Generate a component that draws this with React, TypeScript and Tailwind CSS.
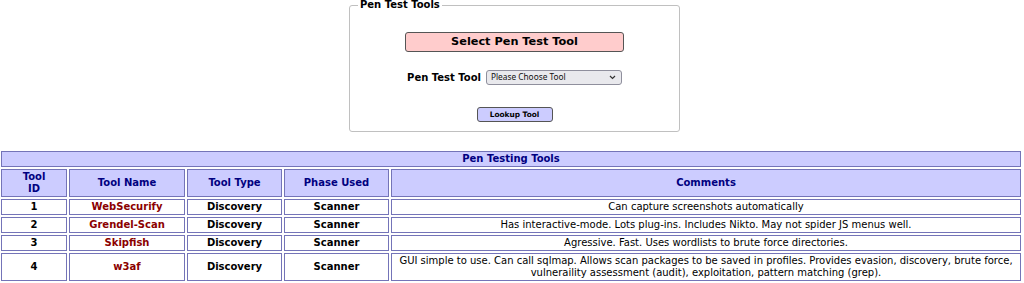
import React from "react";

const rows = [
  { id: "1", name: "WebSecurify", type: "Discovery", phase: "Scanner", comment: "Can capture screenshots automatically" },
  { id: "2", name: "Grendel-Scan", type: "Discovery", phase: "Scanner", comment: "Has interactive-mode. Lots plug-ins. Includes Nikto. May not spider JS menus well." },
  { id: "3", name: "Skipfish", type: "Discovery", phase: "Scanner", comment: "Agressive. Fast. Uses wordlists to brute force directories." },
  { id: "4", name: "w3af", type: "Discovery", phase: "Scanner", comment: "GUI simple to use. Can call sqlmap. Allows scan packages to be saved in profiles. Provides evasion, discovery, brute force, vulneraility assessment (audit), exploitation, pattern matching (grep)." },
];

const cell = "border border-[#7474b8] text-center px-[1px] py-[1px]";

export default function App() {
  return (
    <div className="font-['DejaVu_Sans',sans-serif] text-black bg-white w-[1024px] h-[283px] overflow-hidden">
      <fieldset className="w-[331px] h-[133px] border border-[#c0c0c0] rounded-[3px] px-[8px] pt-[1px] mt-[-1px] ml-[349px]">
        <legend className="font-bold text-[10px] leading-[12px] px-[2px]">Pen Test Tools</legend>
        <div className="flex flex-col items-center">
          <div className="mt-[20px] w-[219px] h-[20px] bg-[#ffcccc] border border-[#555] rounded-[3px] flex items-center justify-center font-bold text-[11.3px]">
            Select Pen Test Tool
          </div>
          <div className="mt-[18px] flex items-center gap-[5px]">
            <span className="font-bold text-[10px]">Pen Test Tool</span>
            <div className="w-[136px] h-[15px] bg-[#e9e9ed] border border-[#8f8f9d] rounded-[3px] flex items-center justify-between pl-[4px] pr-[5px] font-['Noto_Sans',sans-serif] text-[8.3px] text-[#111]">
              <span>Please Choose Tool</span>
              <svg width="7" height="5" viewBox="0 0 7 5"><path d="M1 1l2.5 2.5L6 1" fill="none" stroke="#333" strokeWidth="1.2" /></svg>
            </div>
          </div>
          <div className="mt-[22px] w-[76px] h-[15px] bg-[#ccccff] border border-[#555] rounded-[3px] flex items-center justify-center font-bold text-[7.4px]">
            Lookup Tool
          </div>
        </div>
      </fieldset>
      <table className="mt-[17px] w-[1024px] ml-[-1px] table-fixed border-separate border-spacing-[2px] text-[10px] leading-[12px]">
        <colgroup>
          <col className="w-[66px]" />
          <col className="w-[116px]" />
          <col className="w-[95px]" />
          <col className="w-[105px]" />
          <col />
        </colgroup>
        <tbody>
          <tr>
            <td colSpan={5} className={`${cell} bg-[#ccccff] font-bold text-[#000080]`}>Pen Testing Tools</td>
          </tr>
          <tr className="bg-[#ccccff] text-[#000080] font-bold">
            <td className={cell}>Tool<br />ID</td>
            <td className={cell}>Tool Name</td>
            <td className={cell}>Tool Type</td>
            <td className={cell}>Phase Used</td>
            <td className={cell}>Comments</td>
          </tr>
          {rows.map((r) => (
            <tr key={r.id}>
              <td className={`${cell} font-bold`}>{r.id}</td>
              <td className={`${cell} font-bold text-[#8b0000]`}>{r.name}</td>
              <td className={`${cell} font-bold`}>{r.type}</td>
              <td className={`${cell} font-bold`}>{r.phase}</td>
              <td className={cell}>{r.comment}</td>
            </tr>
          ))}
        </tbody>
      </table>
    </div>
  );
}
